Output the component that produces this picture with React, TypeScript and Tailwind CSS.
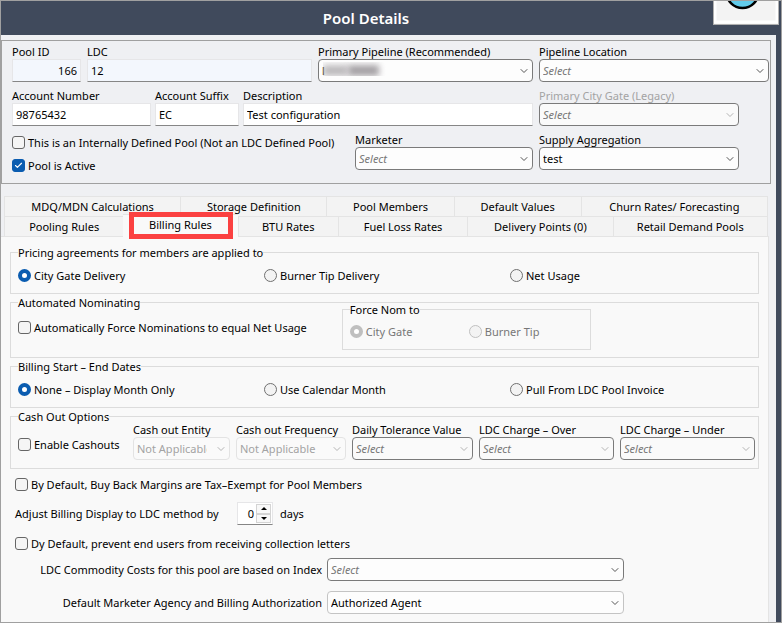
import { useId, type ReactNode } from "react";
import { Check, ChevronDown } from "lucide-react";

type FieldProps = { label: string; className?: string; muted?: boolean; children: (id: string) => ReactNode };

function Field({ label, className = "", muted = false, children }: FieldProps) {
  const id = useId();
  return (
    <div className={`flex min-w-0 flex-col ${className}`}>
      <label htmlFor={id} className={`whitespace-nowrap ${muted ? "text-[#a3a3a3]" : ""}`}>
        {label}
      </label>
      {children(id)}
    </div>
  );
}

type TextBoxProps = { id: string; value: string; readOnly?: boolean; alignRight?: boolean };

function TextBox({ id, value, readOnly = false, alignRight = false }: TextBoxProps) {
  return (
    <input
      id={id}
      type="text"
      defaultValue={value}
      readOnly={readOnly}
      className={`h-[23px] w-full border border-[#e6e6e8] border-b-[#868686] px-[3px] outline-none ${
        readOnly ? "bg-[#f3f7fd]" : "bg-white"
      } ${alignRight ? "text-right" : ""}`}
    />
  );
}

type PickerProps = {
  id: string;
  value?: string;
  disabled?: boolean;
  faint?: boolean;
  dimArrow?: boolean;
};

function Picker({ id, value, disabled = false, faint = false, dimArrow = false }: PickerProps) {
  const border = disabled ? "border-[#e3e3e3]" : faint ? "border-[#c4c4c4]" : "border-[#7a7a7a]";
  const text = disabled ? "text-[#a3a3a3]" : value ? "text-black" : "text-[#777] italic";
  const fill = disabled || dimArrow ? "bg-[#fafafa]" : "bg-[#fdfdfd]";
  return (
    <div className="relative">
      <select
        id={id}
        disabled={disabled}
        className={`block h-[23px] w-full appearance-none rounded-[4px] border pr-[22px] pl-[3px] opacity-100 outline-none ${border} ${text} ${fill}`}
      >
        <option>{value ?? "Select"}</option>
      </select>
      <ChevronDown
        className={`pointer-events-none absolute top-[6px] right-[3px] h-3 w-3 ${
          disabled || dimArrow ? "text-[#b4b4b4]" : "text-[#555]"
        }`}
        strokeWidth={2}
      />
    </div>
  );
}

function CheckBox({ label, checked = false }: { label: string; checked?: boolean }) {
  return (
    <label className="flex items-center gap-[3px] whitespace-nowrap">
      <span className="relative flex h-[13px] w-[13px] shrink-0">
        <input
          type="checkbox"
          defaultChecked={checked}
          className="peer h-[13px] w-[13px] appearance-none rounded-[3px] border border-[#666] bg-[#f5f5f5] checked:border-[#0a5cb0] checked:bg-[#0a5cb0]"
        />
        <Check
          className="pointer-events-none absolute top-[2px] left-[2px] hidden h-[9px] w-[9px] text-white peer-checked:block"
          strokeWidth={3}
        />
      </span>
      {label}
    </label>
  );
}

type RadioProps = { name: string; label: string; checked?: boolean; disabled?: boolean };

function Radio({ name, label, checked = false, disabled = false }: RadioProps) {
  return (
    <label className={`flex items-center gap-[3px] whitespace-nowrap ${disabled ? "text-[#777]" : ""}`}>
      <input
        type="radio"
        name={name}
        defaultChecked={checked}
        disabled={disabled}
        className="h-[13px] w-[13px] shrink-0 appearance-none rounded-full border border-[#707070] bg-[#f3f3f3] checked:border-4 checked:border-[#0a5cb0] checked:bg-white disabled:border-[#c0c0c0] disabled:checked:border-[#bfbfbf]"
      />
      {label}
    </label>
  );
}

function Group({ title, className = "", children }: { title: string; className?: string; children: ReactNode }) {
  return (
    <fieldset className={`min-w-0 border border-[#dcdcdc] pr-[2px] pl-[7px] ${className}`}>
      <legend className="whitespace-nowrap">{title}</legend>
      {children}
    </fieldset>
  );
}

function Tab({ label, active = false }: { label: string; active?: boolean }) {
  if (active) {
    return (
      <button
        type="button"
        role="tab"
        aria-selected="true"
        className="relative z-10 -mt-[2px] -mb-px border-t border-[#e4e4e4] bg-[#f9f9f9] pb-[3px] whitespace-nowrap"
      >
        {label}
        <span className="pointer-events-none absolute -top-[3px] right-[5px] -bottom-[2px] left-[6px] border-[5px] border-[#fb4141]" />
      </button>
    );
  }
  return (
    <button
      type="button"
      role="tab"
      aria-selected="false"
      className="border-t border-l border-[#e4e4e4] bg-[#f3f3f3] whitespace-nowrap last:border-r"
    >
      {label}
    </button>
  );
}

const upperTabs = ["MDQ/MDN Calculations", "Storage Definition", "Pool Members", "Default Values", "Churn Rates/ Forecasting"];
const lowerTabs = ["Pooling Rules", "Billing Rules", "BTU Rates", "Fuel Loss Rates", "Delivery Points (0)", "Retail Demand Pools"];

function Summary() {
  return (
    <section className="grid grid-cols-[minmax(0,1fr)_230px] gap-x-[6px] border border-[#a0a0a0] pt-[3px] pr-px pb-[10px] pl-[10px]">
      <div className="flex flex-col gap-[6px]">
        <div className="flex gap-[6px]">
          <Field label="Pool ID" className="w-[69px]">
            {(id) => <TextBox id={id} value="166" readOnly alignRight />}
          </Field>
          <Field label="LDC" className="flex-1">
            {(id) => <TextBox id={id} value="12" readOnly />}
          </Field>
          <Field label="Primary Pipeline (Recommended)" className="w-[215px]">
            {(id) => (
              <div className="relative">
                <Picker id={id} value="l" />
                <span className="pointer-events-none absolute top-[3px] left-[5px] flex h-[14px] w-[64px] items-end overflow-hidden">
                  <span className="h-[11px] w-[25px] bg-[#bcbabc] blur-[3px]" />
                  <span className="h-[11px] w-[31px] bg-[#a5a1a5] blur-[3px]" />
                </span>
              </div>
            )}
          </Field>
        </div>
        <div className="flex gap-[4px]">
          <Field label="Account Number" className="w-[139px]">
            {(id) => <TextBox id={id} value="98765432" />}
          </Field>
          <Field label="Account Suffix" className="w-[84px]">
            {(id) => <TextBox id={id} value="EC" />}
          </Field>
          <Field label="Description" className="flex-1">
            {(id) => <TextBox id={id} value="Test configuration" />}
          </Field>
        </div>
        <div className="flex justify-between">
          <div className="flex flex-col gap-2 pt-[3px]">
            <CheckBox label="This is an Internally Defined Pool (Not an LDC Defined Pool)" />
            <CheckBox label="Pool is Active" checked />
          </div>
          <Field label="Marketer" className="w-[178px]">
            {(id) => <Picker id={id} />}
          </Field>
        </div>
      </div>
      <div className="flex flex-col gap-[6px]">
        <Field label="Pipeline Location">{(id) => <Picker id={id} />}</Field>
        <Field label="Primary City Gate (Legacy)" className="w-[200px]" muted>
          {(id) => <Picker id={id} dimArrow />}
        </Field>
        <Field label="Supply Aggregation" className="w-[200px]">
          {(id) => <Picker id={id} value="test" />}
        </Field>
      </div>
    </section>
  );
}

function BillingRules() {
  const indexId = useId();
  const agencyId = useId();
  const daysId = useId();
  return (
    <div role="tabpanel" className="mr-[7px] flex flex-1 flex-col border-t border-r border-[#e4e4e4] bg-[#f9f9f9] pt-2 pr-[9px] pl-[9px]">
      <Group title="Pricing agreements for members are applied to" className="pb-[10px]">
        <div className="grid grid-cols-3 pt-[8px]">
          <Radio name="pricing" label="City Gate Delivery" checked />
          <Radio name="pricing" label="Burner Tip Delivery" />
          <Radio name="pricing" label="Net Usage" />
        </div>
      </Group>

      <Group title="Automated Nominating" className="mt-px pb-[7px]">
        <div className="flex items-start gap-[35px]">
          <div className="pt-[10px]">
            <CheckBox label="Automatically Force Nominations to equal Net Usage" />
          </div>
          <Group title="Force Nom to" className="-mt-2 w-[249px] pb-[10px]">
            <div className="grid grid-cols-2 pt-[7px]">
              <Radio name="force" label="City Gate" checked disabled />
              <Radio name="force" label="Burner Tip" disabled />
            </div>
          </Group>
        </div>
      </Group>

      <Group title="Billing Start – End Dates" className="mt-px pb-[10px]">
        <div className="grid grid-cols-3 pt-[8px]">
          <Radio name="dates" label="None – Display Month Only" checked />
          <Radio name="dates" label="Use Calendar Month" />
          <Radio name="dates" label="Pull From LDC Pool Invoice" />
        </div>
      </Group>

      <Group title="Cash Out Options" className="mt-px pb-2">
        <div className="-mt-[2px] flex gap-[6px] pr-px">
          <div className="w-[109px] pt-[15px]">
            <CheckBox label="Enable Cashouts" />
          </div>
          <Field label="Cash out Entity" className="w-[97px]">
            {(id) => <Picker id={id} value="Not Applicable" disabled />}
          </Field>
          <Field label="Cash out Frequency" className="w-[110px]">
            {(id) => <Picker id={id} value="Not Applicable" disabled />}
          </Field>
          <Field label="Daily Tolerance Value" className="w-[121px]">
            {(id) => <Picker id={id} dimArrow />}
          </Field>
          <Field label="LDC Charge – Over" className="flex-1">
            {(id) => <Picker id={id} dimArrow />}
          </Field>
          <Field label="LDC Charge – Under" className="flex-1">
            {(id) => <Picker id={id} dimArrow />}
          </Field>
        </div>
      </Group>

      <div className="flex flex-col items-start pt-2 pl-[5px]">
        <CheckBox label="By Default, Buy Back Margins are Tax–Exempt for Pool Members" />
        <div className="mt-[10px] flex items-center gap-[7px]">
          <label htmlFor={daysId} className="w-[215px] whitespace-nowrap">
            Adjust Billing Display to LDC method by
          </label>
          <div className="flex h-[23px] w-[36px] border border-[#e6e6e8] border-b-[#868686] bg-white p-px">
            <input id={daysId} type="text" defaultValue="0" className="w-[17px] pr-[2px] text-right outline-none" />
            <div className="flex flex-1 flex-col">
              <button type="button" aria-label="Increase days" className="flex flex-1 items-center justify-center border border-[#d4d4d4] bg-[#f8f8f8]">
                <span className="h-0 w-0 border-x-[3px] border-b-[3px] border-x-transparent border-b-black" />
              </button>
              <button type="button" aria-label="Decrease days" className="flex flex-1 items-center justify-center border border-[#d4d4d4] bg-[#f8f8f8]">
                <span className="h-0 w-0 border-x-[3px] border-t-[3px] border-x-transparent border-t-black" />
              </button>
            </div>
          </div>
          <span>days</span>
        </div>
        <div className="mt-[11px]">
          <CheckBox label="Dy Default, prevent end users from receiving collection letters" />
        </div>
      </div>

      <div className="mt-[7px] grid grid-cols-[312px_minmax(0,297px)] items-center gap-x-[5px] gap-y-[10px] pb-[7px]">
        <label htmlFor={indexId} className="text-right whitespace-nowrap">
          LDC Commodity Costs for this pool are based on Index
        </label>
        <Picker id={indexId} />
        <label htmlFor={agencyId} className="text-right whitespace-nowrap">
          Default Marketer Agency and Billing Authorization
        </label>
        <Picker id={agencyId} value="Authorized Agent" faint />
      </div>
    </div>
  );
}

export default function App() {
  return (
    <div className="flex min-h-screen flex-col border border-[#a0a0a0] bg-[#404a5c] font-['Noto_Sans',sans-serif] text-[11px] leading-[15px] text-black">
      <header className="relative flex h-[34px] items-center justify-center">
        <h1 className="pr-[50px] text-[15px] leading-5 font-semibold text-white">Pool Details</h1>
        <div className="absolute top-0 right-[2px] h-6 w-[66px] border border-t-0 border-[#b0b0b0] bg-[#f3f3f3]">
          <svg viewBox="0 0 64 23" className="block h-[23px] w-16">
            <path d="M1 0V21H63V0" fill="none" stroke="#fff" strokeWidth="3" />
            <circle cx="28.500" cy="-9" r="16" fill="#62cbea" stroke="#000" strokeWidth="2.500" />
          </svg>
        </div>
      </header>
      <main className="mr-[5px] flex flex-1 flex-col bg-[#eff0f3]">
        <div className="pt-[5px] pr-[5px]">
          <Summary />
        </div>
        <div role="tablist" className="mt-3 mr-2 ml-[3px]">
          <div role="presentation" className="grid h-5 grid-cols-[176fr_146fr_127fr_127fr_187fr]">
            {upperTabs.map((t) => (
              <Tab key={t} label={t} />
            ))}
          </div>
          <div role="presentation" className="grid h-5 grid-cols-[119fr_114fr_100fr_129fr_145fr_155fr]">
            {lowerTabs.map((t) => (
              <Tab key={t} label={t} active={t === "Billing Rules"} />
            ))}
          </div>
        </div>
        <BillingRules />
      </main>
    </div>
  );
}
